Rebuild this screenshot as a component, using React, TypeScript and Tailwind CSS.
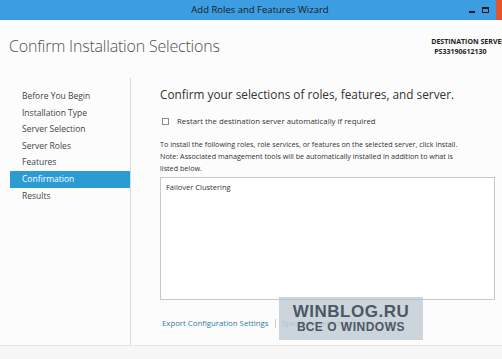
const navItems = [
  "Before You Begin",
  "Installation Type",
  "Server Selection",
  "Server Roles",
  "Features",
  "Confirmation",
  "Results",
];

export default function App() {
  return (
    <div
      className="flex h-[359px] w-[502px] flex-col overflow-hidden bg-[#fcfcfc] text-[#333]"
      style={{ fontFamily: '"Open Sans", "Noto Sans", sans-serif' }}
    >
      {/* title bar */}
      <div className="relative flex h-[20px] shrink-0 items-center justify-center bg-[#3d9de2]">
        <span className="pl-[18px] text-[9.5px] text-[#1a1a1a]">Add Roles and Features Wizard</span>
        <div className="absolute right-0 top-0 flex h-full items-center gap-[7px]">
          <span className="mt-[3px] h-[2px] w-[6px] bg-[#1a1a1a]" />
          <span className="h-[6px] w-[7px] border border-t-2 border-[#1a1a1a]" />
          <span className="h-full w-[6px] bg-[#e0552e]" />
        </div>
      </div>

      {/* header */}
      <div className="flex h-[58px] shrink-0 items-start justify-between pl-[9px] pt-[14px]">
        <h1 className="text-[16px] font-light tracking-[-0.2px] text-[#505050]">
          Confirm Installation Selections
        </h1>
        <div className="mr-[-4px] whitespace-nowrap pt-[3px] text-[7px] font-bold leading-[10px] text-[#222]">
          <div>DESTINATION SERVER</div>
          <div className="pl-[3px]">PS33190612130</div>
        </div>
      </div>

      <div className="flex flex-1">
        {/* nav */}
        <div className="flex w-[131px] shrink-0 flex-col border-r border-[#d9d9d9] pt-[10px] pb-[12px] pl-[10px]">
          {navItems.map((item) => (
            <div
              key={item}
              className={
                item === "Confirmation"
                  ? "h-[16.6px] bg-[#2b9bd3] pl-[12px] text-[8.5px] leading-[16.6px] text-white"
                  : "h-[16.6px] pl-[12px] text-[8.5px] leading-[16.6px] text-[#444]"
              }
            >
              {item}
            </div>
          ))}
        </div>

        {/* content */}
        <div className="flex flex-1 flex-col pl-[29px] pr-[7px] pt-[7px]">
          <h2 className="text-[11.8px] leading-[18px] text-[#333]">
            Confirm your selections of roles, features, and server.
          </h2>
          <label className="mt-[13px] flex items-center gap-[8px] pl-[2px] text-[7.8px] text-[#333]">
            <span className="h-[7px] w-[7px] border border-[#8a8a8a] bg-white" />
            Restart the destination server automatically if required
          </label>
          <p className="mt-[10px] text-[7.2px] leading-[12px] text-[#333]">
            To install the following roles, role services, or features on the selected server, click Install.
            <br />
            Note: Associated management tools will be automatically installed in addition to what is
            <br />
            listed below.
          </p>
          <div className="mt-[3px] h-[123px] border border-[#c8c8c8] bg-white px-[5px] pt-[4px] text-[7.5px] text-[#333]">
            Failover Clustering
          </div>
          <div className="relative mt-[18px] flex items-center text-[7.8px]">
            <span className="pl-[2px] text-[#2a7ca6]">Export Configuration Settings</span>
            <span className="mx-[6px] h-[9px] w-px bg-[#cfcfcf]" />
            <span className="text-[#8cc0dc]">Specify an alternate source path</span>
            <div className="absolute left-[119px] top-[-21px] flex h-[43px] w-[144px] flex-col items-center justify-center bg-[#b9c4cf]/70 leading-none">
              <span
                className="text-[17px] font-bold tracking-[0.5px] text-[#4b5866]"
                style={{ fontFamily: '"Liberation Sans", Arial, sans-serif' }}
              >
                WINBLOG.RU
              </span>
              <span
                className="mt-[1px] text-[12px] font-bold tracking-[0.5px] text-[#4b5866]"
                style={{ fontFamily: '"Liberation Sans", Arial, sans-serif' }}
              >
                ВСЕ О WINDOWS
              </span>
            </div>
          </div>
        </div>
      </div>

      <div className="h-[14px] shrink-0 border-t border-[#e6e6e6] bg-[#f7f7f7]" />
    </div>
  );
}
